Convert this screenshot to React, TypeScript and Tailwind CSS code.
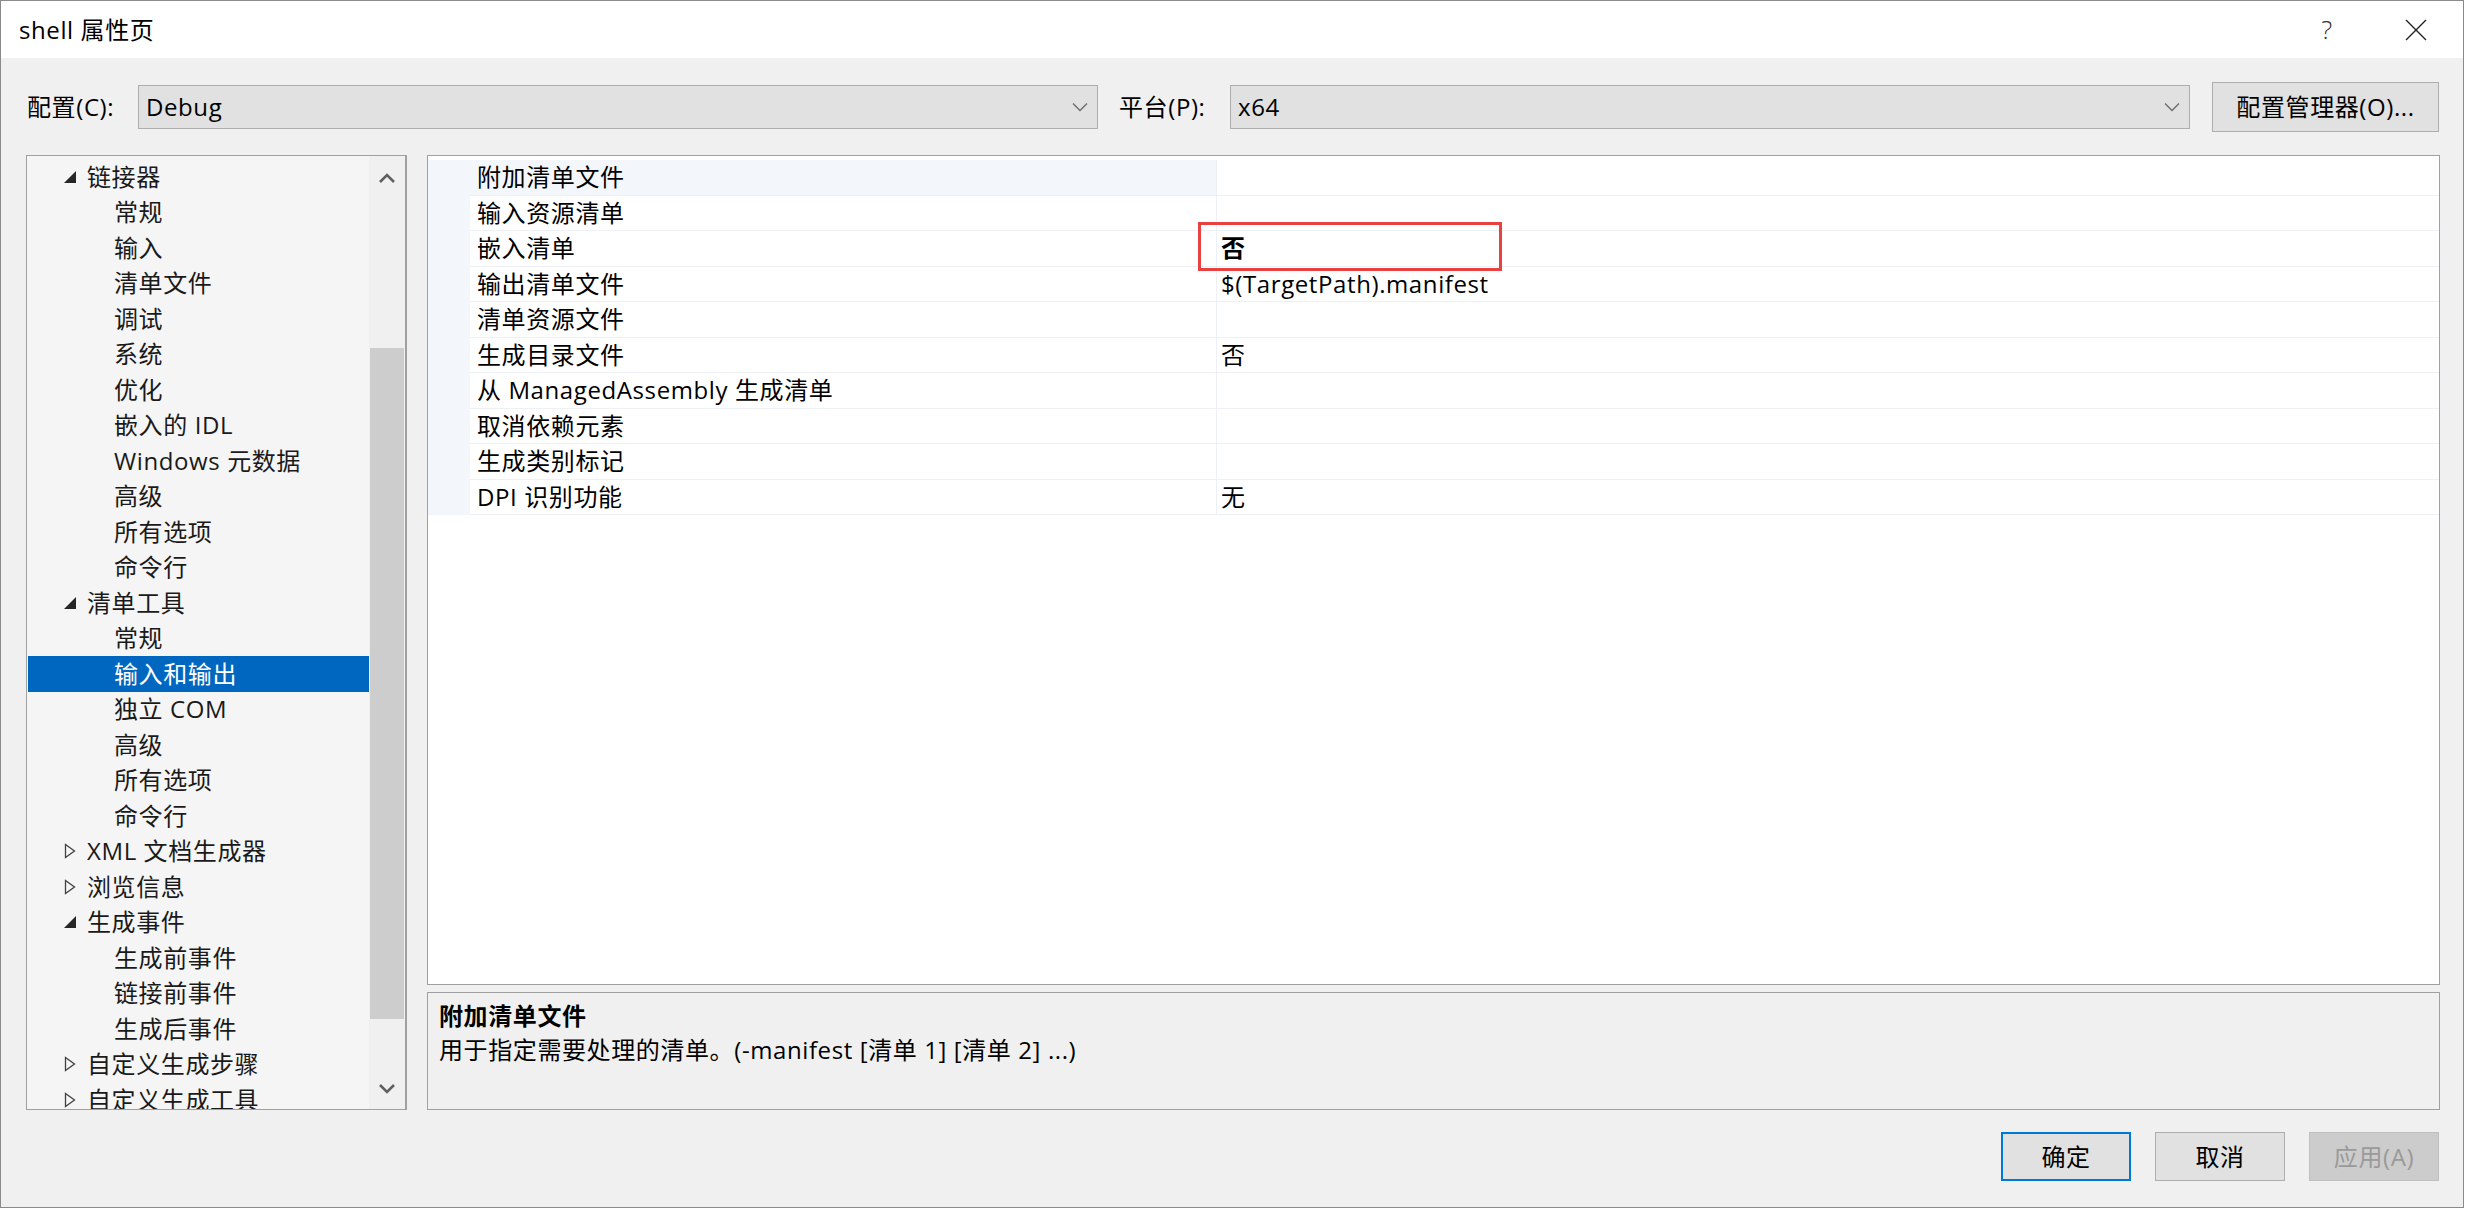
import React from "react";

type TreeItem = {
  label: string;
  level: 1 | 2;
  state?: "open" | "closed";
  selected?: boolean;
};

const tree: TreeItem[] = [
  { label: "链接器", level: 1, state: "open" },
  { label: "常规", level: 2 },
  { label: "输入", level: 2 },
  { label: "清单文件", level: 2 },
  { label: "调试", level: 2 },
  { label: "系统", level: 2 },
  { label: "优化", level: 2 },
  { label: "嵌入的 IDL", level: 2 },
  { label: "Windows 元数据", level: 2 },
  { label: "高级", level: 2 },
  { label: "所有选项", level: 2 },
  { label: "命令行", level: 2 },
  { label: "清单工具", level: 1, state: "open" },
  { label: "常规", level: 2 },
  { label: "输入和输出", level: 2, selected: true },
  { label: "独立 COM", level: 2 },
  { label: "高级", level: 2 },
  { label: "所有选项", level: 2 },
  { label: "命令行", level: 2 },
  { label: "XML 文档生成器", level: 1, state: "closed" },
  { label: "浏览信息", level: 1, state: "closed" },
  { label: "生成事件", level: 1, state: "open" },
  { label: "生成前事件", level: 2 },
  { label: "链接前事件", level: 2 },
  { label: "生成后事件", level: 2 },
  { label: "自定义生成步骤", level: 1, state: "closed" },
  { label: "自定义生成工具", level: 1, state: "closed" },
];

const props: { name: string; value?: string; bold?: boolean }[] = [
  { name: "附加清单文件" },
  { name: "输入资源清单" },
  { name: "嵌入清单", value: "否", bold: true },
  { name: "输出清单文件", value: "$(TargetPath).manifest" },
  { name: "清单资源文件" },
  { name: "生成目录文件", value: "否" },
  { name: "从 ManagedAssembly 生成清单" },
  { name: "取消依赖元素" },
  { name: "生成类别标记" },
  { name: "DPI 识别功能", value: "无" },
];

function ComboChevron() {
  return (
    <svg width="16" height="10" viewBox="0 0 16 10" className="shrink-0">
      <polyline points="1,1.5 8,8.5 15,1.5" fill="none" stroke="#6b6b6b" strokeWidth="1.3" />
    </svg>
  );
}

function Combo({ value }: { value: string }) {
  return (
    <div className="flex items-center justify-between w-[960px] h-[44px] bg-[#e1e1e1] border border-[#adadad] pl-[7px] pr-[9px]">
      <span>{value}</span>
      <ComboChevron />
    </div>
  );
}

function Toggle({ state }: { state?: "open" | "closed" }) {
  if (state === "open")
    return (
      <svg width="14" height="14" viewBox="0 0 14 14">
        <polygon points="13,1 13,13 1,13" fill="#262626" />
      </svg>
    );
  return (
    <svg width="14" height="16" viewBox="0 0 14 16">
      <polygon points="2.5,1.5 11.5,8 2.5,14.5" fill="none" stroke="#404040" strokeWidth="1.3" />
    </svg>
  );
}

function Tree() {
  return (
    <div className="flex w-[381px] h-[955px] border border-[#a0a0a0] border-r-2 bg-[#f5f5f5] overflow-hidden">
      <div className="flex-1 pt-[3px] pl-[1px] overflow-hidden">
        {tree.map((t, i) => (
          <div
            key={i}
            className={`flex items-center h-[35.5px] whitespace-nowrap ${
              t.selected ? "bg-[#0067c0] text-white" : "text-[#1a1a1a]"
            }`}
          >
            {t.level === 1 ? (
              <>
                <span className="w-[35px] shrink-0" />
                <span className="w-[24px] shrink-0 flex items-center">
                  <Toggle state={t.state} />
                </span>
                <span>{t.label}</span>
              </>
            ) : (
              <>
                <span className="w-[86px] shrink-0" />
                <span>{t.label}</span>
              </>
            )}
          </div>
        ))}
      </div>
      <div className="flex flex-col w-[36px] bg-[#f0f0f0]">
        <div className="h-[44px] flex items-center justify-center">
          <svg width="18" height="12" viewBox="0 0 18 12">
            <polyline points="2,10 9,3 16,10" fill="none" stroke="#606060" strokeWidth="2.6" />
          </svg>
        </div>
        <div className="h-[148px]" />
        <div className="h-[671px] mx-[1px] bg-[#cdcdcd]" />
        <div className="flex-1 flex items-end justify-center pb-[14px]">
          <svg width="18" height="12" viewBox="0 0 18 12">
            <polyline points="2,2 9,9 16,2" fill="none" stroke="#606060" strokeWidth="2.6" />
          </svg>
        </div>
      </div>
    </div>
  );
}

function Grid() {
  return (
    <div className="relative h-[830px] bg-white border border-[#a0a0a0] pt-[4px] overflow-hidden">
      {props.map((p, i) => (
        <div key={i} className="flex h-[35.5px]">
          <div className="w-[42px] shrink-0 bg-[#f3f6fb]" />
          <div
            className={`w-[746px] shrink-0 flex items-center pl-[7px] border-b border-[#edf1f7] whitespace-nowrap ${
              i === 0 ? "bg-[#f3f6fb]" : ""
            }`}
          >
            {p.name}
          </div>
          <div className="flex-1 flex items-center pl-[4px] border-l border-b border-[#edf1f7] whitespace-nowrap">
            <span className={p.bold ? "font-bold" : ""}>{p.value}</span>
          </div>
        </div>
      ))}
      <div className="absolute left-[770px] top-[66px] w-[304px] h-[49px] border-[3px] border-[#e8413f]" />
    </div>
  );
}

function Button({ label, primary, disabled }: { label: string; primary?: boolean; disabled?: boolean }) {
  return (
    <div
      className={`flex items-center justify-center w-[130px] h-[49px] ${
        primary
          ? "bg-[#e1e1e1] border-2 border-[#0078d7]"
          : disabled
          ? "bg-[#cccccc] border border-[#bfbfbf] text-[#9a9a9a]"
          : "bg-[#e1e1e1] border border-[#adadad]"
      }`}
    >
      {label}
    </div>
  );
}

export default function App() {
  return (
    <div className="w-[2464px] h-[1208px] flex flex-col bg-[#f0f0f0] border border-[#8a8a8a] text-[24px] tracking-[0.6px] text-black font-['Open_Sans','Noto_Sans_CJK_SC',sans-serif] overflow-hidden">
      <div className="h-[57px] shrink-0 bg-white flex items-center justify-between pl-[18px]">
        <span>shell 属性页</span>
        <div className="flex items-center">
          <span className="text-[26px] text-[#333] font-light w-[40px] text-center">?</span>
          <span className="w-[57px]" />
          <svg width="24" height="24" viewBox="0 0 24 24" className="mr-[35px]">
            <path d="M2 2 L22 22 M22 2 L2 22" stroke="#222" strokeWidth="1.4" />
          </svg>
        </div>
      </div>

      <div className="h-[97px] shrink-0 flex items-center pl-[26px]">
        <span className="w-[111px] shrink-0">配置(C):</span>
        <Combo value="Debug" />
        <span className="w-[132px] shrink-0 pl-[21px]">平台(P):</span>
        <Combo value="x64" />
        <div className="ml-[22px] w-[227px] h-[50px] flex items-center justify-center bg-[#e1e1e1] border border-[#adadad]">
          配置管理器(O)...
        </div>
      </div>

      <div className="flex pl-[25px] gap-[20px] h-[955px] shrink-0">
        <Tree />
        <div className="flex flex-col w-[2013px] gap-[7px]">
          <Grid />
          <div className="flex-1 border border-[#a0a0a0] bg-[#f0f0f0] pt-[6px] pl-[11px]">
            <div className="h-[34px] flex items-center font-bold">附加清单文件</div>
            <div className="h-[34px] flex items-center">用于指定需要处理的清单。(-manifest [清单 1] [清单 2] ...)</div>
          </div>
        </div>
      </div>

      <div className="flex-1 flex justify-end items-start pt-[22px] pr-[24px] gap-[24px]">
        <Button label="确定" primary />
        <Button label="取消" />
        <Button label="应用(A)" disabled />
      </div>
    </div>
  );
}
